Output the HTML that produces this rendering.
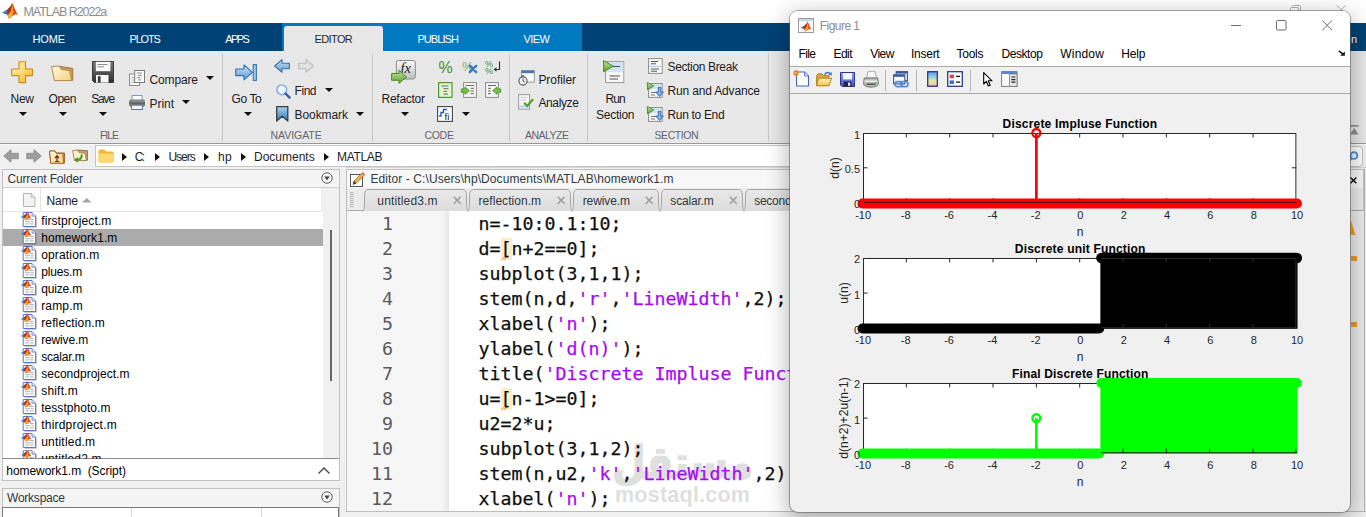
<!DOCTYPE html>
<html lang="en"><head><meta charset="utf-8"><title>MATLAB R2022a</title>
<style>
html,body{margin:0;padding:0;}
body{width:1366px;height:517px;overflow:hidden;background:#f0f0f0;font-family:"Liberation Sans",sans-serif;position:relative;}
#main{position:absolute;left:0;top:0;width:1366px;height:517px;overflow:hidden;background:#f0f0f0;}
.t{position:absolute;white-space:pre;}
.b{position:absolute;box-sizing:border-box;}
svg{position:absolute;overflow:visible;}
#fig{position:absolute;left:790px;top:11px;width:560px;height:501px;background:#f0f0f0;border-radius:8px;overflow:hidden;
 box-shadow:0 6px 22px 2px rgba(0,0,0,.30),0 0 0 1px rgba(110,110,110,.55);}

</style></head>
<body>
<div id="main">
<div class="b" style="left:0px;top:0px;width:1366px;height:23px;background:#ffffff;"></div>
<div class="b" style="left:0px;top:23px;width:1366px;height:28px;background:#004275;"></div>
<div class="b" style="left:281.5px;top:23px;width:300.7px;height:28px;background:#0079c1;"></div>
<div class="b" style="left:284px;top:26px;width:99px;height:25px;background:#e8e8e8;border-radius:3px 3px 0 0;"></div>
<div class="b" style="left:0px;top:51px;width:1366px;height:92px;background:#e8e8e8;"></div>
<div class="b" style="left:0px;top:143px;width:1366px;height:1px;background:#999999;"></div>
<div class="b" style="left:0px;top:144px;width:1366px;height:1px;background:#fbfbfb;"></div>
<div class="b" style="left:222px;top:54px;width:1px;height:87px;background:#c6c6c6;"></div>
<div class="b" style="left:372px;top:54px;width:1px;height:87px;background:#c6c6c6;"></div>
<div class="b" style="left:509px;top:54px;width:1px;height:87px;background:#c6c6c6;"></div>
<div class="b" style="left:587px;top:54px;width:1px;height:87px;background:#c6c6c6;"></div>
<div class="b" style="left:768px;top:54px;width:1px;height:87px;background:#c6c6c6;"></div>
<svg style="left:19px;top:112px;" width="8" height="4" viewBox="0 0 8 4"><polygon points="0,0 8,0 4.0,4" fill="#111"/></svg>
<svg style="left:59px;top:112px;" width="8" height="4" viewBox="0 0 8 4"><polygon points="0,0 8,0 4.0,4" fill="#111"/></svg>
<svg style="left:99px;top:112px;" width="8" height="4" viewBox="0 0 8 4"><polygon points="0,0 8,0 4.0,4" fill="#111"/></svg>
<svg style="left:206px;top:76px;" width="8" height="4" viewBox="0 0 8 4"><polygon points="0,0 8,0 4.0,4" fill="#111"/></svg>
<svg style="left:182px;top:100px;" width="8" height="4" viewBox="0 0 8 4"><polygon points="0,0 8,0 4.0,4" fill="#111"/></svg>
<svg style="left:243.5px;top:112px;" width="8" height="4" viewBox="0 0 8 4"><polygon points="0,0 8,0 4.0,4" fill="#111"/></svg>
<svg style="left:325.4px;top:88px;" width="8" height="4" viewBox="0 0 8 4"><polygon points="0,0 8,0 4.0,4" fill="#111"/></svg>
<svg style="left:356.4px;top:112px;" width="8" height="4" viewBox="0 0 8 4"><polygon points="0,0 8,0 4.0,4" fill="#111"/></svg>
<svg style="left:400.6px;top:112px;" width="8" height="4" viewBox="0 0 8 4"><polygon points="0,0 8,0 4.0,4" fill="#111"/></svg>
<svg style="left:461.5px;top:112px;" width="8" height="4" viewBox="0 0 8 4"><polygon points="0,0 8,0 4.0,4" fill="#111"/></svg>
<div class="b" style="left:0px;top:145px;width:1366px;height:24px;background:#f0f0f0;"></div>
<div class="b" style="left:95px;top:145px;width:1250px;height:22px;background:#ffffff;border:1px solid #c4c4c4;"></div>
<svg style="left:121.8px;top:152.5px;" width="5" height="8" viewBox="0 0 5 8"><polygon points="0,0 5,4.0 0,8" fill="#111"/></svg>
<svg style="left:154.7px;top:152.5px;" width="5" height="8" viewBox="0 0 5 8"><polygon points="0,0 5,4.0 0,8" fill="#111"/></svg>
<svg style="left:204.4px;top:152.5px;" width="5" height="8" viewBox="0 0 5 8"><polygon points="0,0 5,4.0 0,8" fill="#111"/></svg>
<svg style="left:241px;top:152.5px;" width="5" height="8" viewBox="0 0 5 8"><polygon points="0,0 5,4.0 0,8" fill="#111"/></svg>
<svg style="left:323.9px;top:152.5px;" width="5" height="8" viewBox="0 0 5 8"><polygon points="0,0 5,4.0 0,8" fill="#111"/></svg>
<div class="b" style="left:2px;top:169px;width:338px;height:312px;background:#ffffff;border:1px solid #c2c2c2;"></div>
<div class="b" style="left:3px;top:170px;width:336px;height:17px;background:#f4f4f4;"></div>
<div class="b" style="left:3px;top:187px;width:336px;height:1px;background:#d0d0d0;"></div>
<div class="b" style="left:3px;top:188px;width:317.5px;height:23px;background:#ffffff;"></div>
<div class="b" style="left:320.5px;top:188px;width:3px;height:23.5px;background:#f0f0f0;"></div>
<div class="b" style="left:3px;top:211px;width:317.5px;height:1px;background:#e4e4e4;"></div>
<div class="b" style="left:40px;top:188px;width:1px;height:23px;background:#e4e4e4;"></div>
<svg style="left:81.5px;top:198.4px;" width="9.5" height="4.5" viewBox="0 0 9.5 4.5"><polygon points="0,4.5 9.5,4.5 4.75,0" fill="#a6a698"/></svg>
<div class="b" style="left:323px;top:188px;width:16px;height:270px;background:#f0f0f0;"></div>
<div class="b" style="left:330px;top:229.5px;width:2px;height:151.5px;background:#686868;"></div>
<div class="b" style="left:3px;top:229px;width:320px;height:16.5px;background:#ababab;"></div>
<div class="b" style="left:2px;top:458px;width:338px;height:23px;background:#ffffff;border:1px solid #c2c2c2;border-top:1px solid #8c8c8c;"></div>
<svg style="left:318px;top:466.5px;" width="12" height="7" viewBox="0 0 12 7"><polyline points="0.5,6.5 6,1 11.5,6.5" fill="none" stroke="#444" stroke-width="1.4"/></svg>
<div class="b" style="left:2px;top:488px;width:338px;height:30px;background:#ffffff;border:1px solid #c2c2c2;"></div>
<div class="b" style="left:3px;top:489px;width:336px;height:18px;background:#f4f4f4;"></div>
<div class="b" style="left:2px;top:507px;width:337px;height:12px;background:#ffffff;border:1px solid #7a7a7a;"></div>
<div class="b" style="left:131px;top:508px;width:1px;height:10px;background:#d8d8d8;"></div>
<div class="b" style="left:261px;top:508px;width:1px;height:10px;background:#d8d8d8;"></div>
<svg style="left:320.6px;top:172px;" width="12" height="12" viewBox="0 0 12 12"><circle cx="6" cy="6" r="5.2" fill="#fff" stroke="#555" stroke-width="1"/><polygon points="3.2,4.6 8.8,4.6 6,8.4" fill="#444"/></svg>
<svg style="left:321px;top:491px;" width="12" height="12" viewBox="0 0 12 12"><circle cx="6" cy="6" r="5.2" fill="#fff" stroke="#555" stroke-width="1"/><polygon points="3.2,4.6 8.8,4.6 6,8.4" fill="#444"/></svg>
<div class="b" style="left:346px;top:166.5px;width:1020px;height:1px;background:#d8d8d8;"></div>
<div class="b" style="left:346px;top:169px;width:1018px;height:343px;background:#ffffff;border:1px solid #c2c2c2;"></div>
<div class="b" style="left:347px;top:170px;width:1016px;height:18px;background:#f8f8f8;"></div>
<div class="b" style="left:347px;top:188px;width:1016px;height:23px;background:#ececec;"></div>
<div class="b" style="left:347px;top:210px;width:1016px;height:1px;background:#a9a9a9;"></div>
<div class="b" style="left:347px;top:211px;width:102px;height:300px;background:linear-gradient(90deg,#f6f6f6 0,#f6f6f6 95px,#e9e9e9 101px,#e2e2e2 102px);"></div>
<div class="b" style="left:449px;top:211px;width:914px;height:300px;background:#ffffff;"></div>
<div class="b" style="left:346px;top:511px;width:1020px;height:1px;background:#bdbdbd;"></div>
<div class="b" style="left:346px;top:512px;width:1020px;height:5px;background:#f0f0f0;"></div>
<svg style="left:349.5px;top:171.5px;" width="15" height="15" viewBox="0 0 15 15"><rect x="0.5" y="2.5" width="12" height="12" fill="#fdfdfd" stroke="#555" stroke-width="1"/><polygon points="3,12.5 4,9 12,1 14.3,3.3 6.3,11.3" fill="#e8b04a" stroke="#7a5a20" stroke-width=".6"/><polygon points="12,1 13,0 15,2 14.3,3.3" fill="#e06a6a"/><polygon points="3,12.5 4,9 6.3,11.3" fill="#333"/></svg>
<svg style="left:350px;top:192px;" width="4" height="15" viewBox="0 0 4 15"><rect x="0" y="0" width="3.5" height="1" fill="#b4b4b4"/><rect x="0" y="2" width="3.5" height="1" fill="#b4b4b4"/><rect x="0" y="4" width="3.5" height="1" fill="#b4b4b4"/><rect x="0" y="6" width="3.5" height="1" fill="#b4b4b4"/><rect x="0" y="8" width="3.5" height="1" fill="#b4b4b4"/><rect x="0" y="10" width="3.5" height="1" fill="#b4b4b4"/><rect x="0" y="12" width="3.5" height="1" fill="#b4b4b4"/><rect x="0" y="14" width="3.5" height="1" fill="#b4b4b4"/></svg>
<svg width="0" height="0" style="left:0;top:0"><defs><linearGradient id="tg" x1="0" y1="0" x2="0" y2="1"><stop offset="0" stop-color="#e9e9e9"/><stop offset="1" stop-color="#dcdcdc"/></linearGradient></defs></svg>
<svg style="left:362.0px;top:188.5px;" width="107.0" height="22" viewBox="0 0 107.0 22"><path d="M0,22 C1.6,22 2.2,20.5 2.4,14 L2.6,6 C2.7,2.5 3.8,0.5 6.5,0.5 L100.5,0.5 C103.2,0.5 104.3,2.5 104.4,6 L104.6,14 C104.8,20.5 105.4,22 107.0,22 Z" fill="url(#tg)" stroke="none"/><path d="M0,22 C1.6,22 2.2,20.5 2.4,14 L2.6,6 C2.7,2.5 3.8,0.5 6.5,0.5 L100.5,0.5 C103.2,0.5 104.3,2.5 104.4,6 L104.6,14 C104.8,20.5 105.4,22 107.0,22" fill="none" stroke="#a4a4a4" stroke-width="1"/></svg>
<svg style="left:453px;top:195.5px;" width="8.5" height="8.5" viewBox="0 0 8.5 8.5"><path d="M0.8,0.8 L7.7,7.7 M7.7,0.8 L0.8,7.7" stroke="#9c9c9c" stroke-width="1.5" fill="none"/></svg>
<svg style="left:467.0px;top:188.5px;" width="106.0" height="22" viewBox="0 0 106.0 22"><path d="M0,22 C1.6,22 2.2,20.5 2.4,14 L2.6,6 C2.7,2.5 3.8,0.5 6.5,0.5 L99.5,0.5 C102.2,0.5 103.3,2.5 103.4,6 L103.6,14 C103.8,20.5 104.4,22 106.0,22 Z" fill="url(#tg)" stroke="none"/><path d="M0,22 C1.6,22 2.2,20.5 2.4,14 L2.6,6 C2.7,2.5 3.8,0.5 6.5,0.5 L99.5,0.5 C102.2,0.5 103.3,2.5 103.4,6 L103.6,14 C103.8,20.5 104.4,22 106.0,22" fill="none" stroke="#a4a4a4" stroke-width="1"/></svg>
<svg style="left:557px;top:195.5px;" width="8.5" height="8.5" viewBox="0 0 8.5 8.5"><path d="M0.8,0.8 L7.7,7.7 M7.7,0.8 L0.8,7.7" stroke="#9c9c9c" stroke-width="1.5" fill="none"/></svg>
<svg style="left:571.0px;top:188.5px;" width="90.0" height="22" viewBox="0 0 90.0 22"><path d="M0,22 C1.6,22 2.2,20.5 2.4,14 L2.6,6 C2.7,2.5 3.8,0.5 6.5,0.5 L83.5,0.5 C86.2,0.5 87.3,2.5 87.4,6 L87.6,14 C87.8,20.5 88.4,22 90.0,22 Z" fill="url(#tg)" stroke="none"/><path d="M0,22 C1.6,22 2.2,20.5 2.4,14 L2.6,6 C2.7,2.5 3.8,0.5 6.5,0.5 L83.5,0.5 C86.2,0.5 87.3,2.5 87.4,6 L87.6,14 C87.8,20.5 88.4,22 90.0,22" fill="none" stroke="#a4a4a4" stroke-width="1"/></svg>
<svg style="left:645px;top:195.5px;" width="8.5" height="8.5" viewBox="0 0 8.5 8.5"><path d="M0.8,0.8 L7.7,7.7 M7.7,0.8 L0.8,7.7" stroke="#9c9c9c" stroke-width="1.5" fill="none"/></svg>
<svg style="left:659.0px;top:188.5px;" width="86.0" height="22" viewBox="0 0 86.0 22"><path d="M0,22 C1.6,22 2.2,20.5 2.4,14 L2.6,6 C2.7,2.5 3.8,0.5 6.5,0.5 L79.5,0.5 C82.2,0.5 83.3,2.5 83.4,6 L83.6,14 C83.8,20.5 84.4,22 86.0,22 Z" fill="url(#tg)" stroke="none"/><path d="M0,22 C1.6,22 2.2,20.5 2.4,14 L2.6,6 C2.7,2.5 3.8,0.5 6.5,0.5 L79.5,0.5 C82.2,0.5 83.3,2.5 83.4,6 L83.6,14 C83.8,20.5 84.4,22 86.0,22" fill="none" stroke="#a4a4a4" stroke-width="1"/></svg>
<svg style="left:728.7px;top:195.5px;" width="8.5" height="8.5" viewBox="0 0 8.5 8.5"><path d="M0.8,0.8 L7.7,7.7 M7.7,0.8 L0.8,7.7" stroke="#9c9c9c" stroke-width="1.5" fill="none"/></svg>
<svg style="left:743.0px;top:188.5px;" width="118.0" height="22" viewBox="0 0 118.0 22"><path d="M0,22 C1.6,22 2.2,20.5 2.4,14 L2.6,6 C2.7,2.5 3.8,0.5 6.5,0.5 L111.5,0.5 C114.2,0.5 115.3,2.5 115.4,6 L115.6,14 C115.8,20.5 116.4,22 118.0,22 Z" fill="url(#tg)" stroke="none"/><path d="M0,22 C1.6,22 2.2,20.5 2.4,14 L2.6,6 C2.7,2.5 3.8,0.5 6.5,0.5 L111.5,0.5 C114.2,0.5 115.3,2.5 115.4,6 L115.6,14 C115.8,20.5 116.4,22 118.0,22" fill="none" stroke="#a4a4a4" stroke-width="1"/></svg>
<div class="b" style="left:501.3px;top:237.7px;width:10.5px;height:22.5px;background:#fdecc4;"></div>
<svg style="left:501.0px;top:255.7px;" width="7" height="5" viewBox="0 0 7 5"><path d="M0.5,4.5 L2.5,1.5 L4,3.5 L6,0.5" stroke="#f0a030" stroke-width="1" fill="none"/></svg>
<div class="b" style="left:501.3px;top:387.7px;width:10.5px;height:22.5px;background:#fdecc4;"></div>
<svg style="left:501.0px;top:405.7px;" width="7" height="5" viewBox="0 0 7 5"><path d="M0.5,4.5 L2.5,1.5 L4,3.5 L6,0.5" stroke="#f0a030" stroke-width="1" fill="none"/></svg>
<span class="t" style="left:612.4px;top:440px;font-family:'DejaVu Sans',sans-serif;font-weight:bold;font-size:45px;line-height:45px;color:#8c8c8c;-webkit-text-stroke:1.6px #8c8c8c;opacity:.27;transform:scaleX(.857);transform-origin:0 0;">مستقل</span>
<svg width="0" height="0" style="left:0;top:0"><defs>
<linearGradient id="gPlus" x1="0" y1="0" x2="1" y2="1"><stop offset="0" stop-color="#fff6c8"/><stop offset=".55" stop-color="#fdd667"/><stop offset="1" stop-color="#f2ae1c"/></linearGradient>
<linearGradient id="gFold" x1="0" y1="0" x2="1" y2="1"><stop offset="0" stop-color="#fffbe6"/><stop offset="1" stop-color="#f6d27c"/></linearGradient>
<linearGradient id="gFlop" x1="0" y1="0" x2="0" y2="1"><stop offset="0" stop-color="#7a7a7a"/><stop offset="1" stop-color="#2e2e2e"/></linearGradient>
<linearGradient id="gBlue" x1="0" y1="0" x2="0" y2="1"><stop offset="0" stop-color="#cfe3f5"/><stop offset="1" stop-color="#5b9bd5"/></linearGradient>
<linearGradient id="gGrey" x1="0" y1="0" x2="0" y2="1"><stop offset="0" stop-color="#ececec"/><stop offset="1" stop-color="#bdbdbd"/></linearGradient>
<linearGradient id="gGreen" x1="0" y1="0" x2="0" y2="1"><stop offset="0" stop-color="#c4e59a"/><stop offset="1" stop-color="#5aa02c"/></linearGradient>
<linearGradient id="gBk" x1="0" y1="0" x2="0" y2="1"><stop offset="0" stop-color="#a9d4f0"/><stop offset="1" stop-color="#2f78b8"/></linearGradient>
<linearGradient id="gFx" x1="0" y1="0" x2="0" y2="1"><stop offset="0" stop-color="#fafafa"/><stop offset="1" stop-color="#bcbcbc"/></linearGradient>
<linearGradient id="gPrn" x1="0" y1="0" x2="0" y2="1"><stop offset="0" stop-color="#b8b8b8"/><stop offset=".5" stop-color="#5c5c5c"/><stop offset="1" stop-color="#a0a0a0"/></linearGradient>
</defs></svg>
<svg style="left:11px;top:61px;" width="22" height="22" viewBox="0 0 22 22"><path d="M8,0.7 h6.6 v7.3 h7 v6.6 h-7 v7 h-6.6 v-7 h-7.3 v-6.6 h7.3 z" fill="url(#gPlus)" stroke="#c98a1a" stroke-width="1.1" stroke-linejoin="round"/></svg>
<svg style="left:51px;top:65px;" width="23" height="17" viewBox="0 0 23 17"><polygon points="8,1.3 21.8,3.4 21.8,15.3 5,15.3" fill="#c79a62" stroke="#a87638" stroke-width="1"/><polygon points="0.6,1.5 8.2,1 10.3,4.6 18.6,5.4 20.6,15.6 3.4,15.6" fill="url(#gFold)" stroke="#b98a48" stroke-width="1" stroke-linejoin="round"/></svg>
<svg style="left:92px;top:61px;" width="22" height="22" viewBox="0 0 22 22"><path d="M0.5,0.5 H21.5 V21.5 H2.5 L0.5,19.5 Z" fill="url(#gFlop)" stroke="#3c3c3c" stroke-width="1"/><rect x="3.8" y="0.8" width="14.6" height="9.4" fill="#fafafa"/><path d="M5.5,3.5 H15.5 M5.5,5.8 H12" stroke="#8a8a8a" stroke-width="1"/><rect x="4" y="14" width="12.5" height="7.6" fill="#fafafa"/><rect x="5.8" y="15.2" width="2.8" height="6.4" fill="#3a3a3a"/></svg>
<svg style="left:129px;top:70px;" width="16" height="16" viewBox="0 0 16 16"><rect x="0.5" y="4" width="10" height="11.5" fill="#f8f8f8" stroke="#8c8c8c" stroke-width="1"/><path d="M2.5,7.5 H6 M2.5,10 H5 M2.5,12.5 H7" stroke="#aaa" stroke-width="1"/><rect x="5.7" y="0.5" width="9.8" height="12" fill="#fcfcfc" stroke="#7c7c7c" stroke-width="1"/><path d="M7.8,3 H13 M9,5.3 H13 M7.8,7.6 H11.5 M9,9.9 H12" stroke="#8a8a8a" stroke-width="1"/></svg>
<svg style="left:129px;top:95px;" width="16" height="15" viewBox="0 0 16 15"><rect x="3" y="0.5" width="10" height="5.5" fill="#fdfdfd" stroke="#7f9cc0" stroke-width="1"/><rect x="0.5" y="5" width="15" height="6.2" rx="1.5" fill="url(#gPrn)" stroke="#5a5a5a" stroke-width=".8"/><rect x="2.6" y="10.2" width="10.8" height="4.3" fill="#f4f8fd" stroke="#4c78b8" stroke-width="1"/></svg>
<svg style="left:235px;top:64px;" width="22" height="17" viewBox="0 0 22 17"><polygon points="0.7,5 9,5 9,0.8 17.5,8.3 9,15.8 9,11.6 0.7,11.6" fill="url(#gBlue)" stroke="#2f6fb0" stroke-width="1.1" stroke-linejoin="round"/><rect x="18.2" y="0.6" width="3.2" height="15.8" fill="#9cc4e8" stroke="#2f6fb0" stroke-width="1"/></svg>
<svg style="left:274px;top:59px;" width="16" height="14" viewBox="0 0 16 14"><polygon points="0.7,7 8,0.7 8,4.3 15.3,4.3 15.3,9.7 8,9.7 8,13.3" fill="url(#gBlue)" stroke="#2f6fb0" stroke-width="1.1" stroke-linejoin="round"/></svg>
<svg style="left:298px;top:59px;" width="16" height="14" viewBox="0 0 16 14"><polygon points="15.3,7 8,0.7 8,4.3 0.7,4.3 0.7,9.7 8,9.7 8,13.3" fill="#e2e2e2" stroke="#bcbcbc" stroke-width="1.1" stroke-linejoin="round"/></svg>
<svg style="left:275.5px;top:83.5px;" width="15" height="15" viewBox="0 0 15 15"><circle cx="5.8" cy="5.8" r="4.9" fill="#eef6fd" stroke="#7aa6d8" stroke-width="1.4"/><path d="M9.5,9.5 L13.6,13.6" stroke="#2a5fa8" stroke-width="2.4" stroke-linecap="round"/></svg>
<svg style="left:276px;top:106px;" width="13" height="16" viewBox="0 0 13 16"><path d="M0.7,0.7 H11.8 V15 L6.25,10.2 L0.7,15 Z" fill="url(#gBk)" stroke="#3c3c3c" stroke-width="1.3" stroke-linejoin="round"/></svg>
<svg style="left:390.5px;top:60px;" width="25" height="24" viewBox="0 0 25 24"><rect x="5.3" y="0.5" width="19" height="18.5" rx="2.5" fill="url(#gFx)" stroke="#8a8a8a" stroke-width="1"/><text x="9.6" y="13.4" font-family="Liberation Serif, serif" font-style="italic" font-size="14.5" fill="#222">fx</text><polygon points="0.6,13.5 8,13.5 8,10.4 15.3,17 8,23.4 8,20.3 0.6,20.3" fill="url(#gGreen)" stroke="#4c8a22" stroke-width="1" stroke-linejoin="round"/></svg>
<svg style="left:438px;top:58.5px;" width="15" height="15" viewBox="0 0 15 15"><text x="0.5" y="13.6" font-family="Liberation Sans, sans-serif" font-size="16" fill="#3f8f1f">%</text></svg>
<svg style="left:461.5px;top:58.5px;" width="16" height="15" viewBox="0 0 16 15"><text x="0" y="11.5" font-family="Liberation Sans, sans-serif" font-size="13" fill="#7ab55a">%</text><path d="M7.8,6.8 L14.2,13.2 M14.2,6.8 L7.8,13.2" stroke="#3a78c0" stroke-width="2.4" stroke-linecap="round"/></svg>
<svg style="left:485px;top:58.5px;" width="16" height="15" viewBox="0 0 16 15"><text x="0" y="7.5" font-family="Liberation Sans, sans-serif" font-size="9" fill="#3f8f1f">%</text><text x="0" y="14.5" font-family="Liberation Sans, sans-serif" font-size="9" fill="#3f8f1f">%</text><path d="M14.5,2.5 V10.5 H10" stroke="#333" stroke-width="1.2" fill="none"/><polygon points="8.5,10.5 11.5,8.3 11.5,12.7" fill="#333"/></svg>
<svg style="left:437.5px;top:82px;" width="15" height="16" viewBox="0 0 15 16"><rect x="0.6" y="0.6" width="13.4" height="14.8" fill="#e6f3d4" stroke="#4e9a28" stroke-width="1.2"/><path d="M3.5,4 H10.5 M5.5,6.7 H10.5 M5.5,9.4 H9 M5.5,12.1 H10" stroke="#5a7a4a" stroke-width="1"/></svg>
<svg style="left:461px;top:82px;" width="16" height="16" viewBox="0 0 16 16"><rect x="2.6" y="0.6" width="12.8" height="14.8" fill="#f8f8f8" stroke="#8c8c8c" stroke-width="1"/><path d="M5,3.5 H13 M9.5,6.3 H13 M9.5,9 H13 M9.5,11.7 H13" stroke="#666" stroke-width="1"/><polygon points="0.3,6.9 4,6.9 4,4.8 8.3,8.6 4,12.4 4,10.3 0.3,10.3" fill="#7cc142" stroke="#3f8f1f" stroke-width=".8"/></svg>
<svg style="left:485px;top:82px;" width="16" height="16" viewBox="0 0 16 16"><rect x="0.6" y="0.6" width="12.8" height="14.8" fill="#f8f8f8" stroke="#8c8c8c" stroke-width="1"/><path d="M3,3.5 H11 M3,6.3 H6 M3,9 H6 M3,11.7 H6" stroke="#666" stroke-width="1"/><polygon points="15.7,6.9 12,6.9 12,4.8 7.7,8.6 12,12.4 12,10.3 15.7,10.3" fill="#7cc142" stroke="#3f8f1f" stroke-width=".8"/></svg>
<svg style="left:437px;top:106px;" width="16" height="16" viewBox="0 0 16 16"><rect x="0.6" y="0.6" width="14.8" height="14.8" fill="#ffffff" stroke="#444" stroke-width="1.1"/><path d="M2,10 H4 V6.5 H6.5 V3.5 H10" stroke="#1f55c8" stroke-width="1.4" fill="none"/><text x="7.5" y="14" font-family="Liberation Sans, sans-serif" font-size="9.5" fill="#111">fi</text></svg>
<svg style="left:518px;top:70px;" width="17" height="16" viewBox="0 0 17 16"><rect x="3.5" y="0.6" width="12.8" height="11.5" fill="#fafafa" stroke="#9a9a9a" stroke-width="1"/><rect x="3.5" y="0.6" width="12.8" height="2.6" fill="#4a78b0"/><circle cx="5" cy="11" r="4.1" fill="#f4f4f4" stroke="#555" stroke-width="1.1"/><path d="M5,11 V8.6 M5,11 L6.8,12.2 M4,5.8 H6" stroke="#444" stroke-width="1"/></svg>
<svg style="left:518px;top:94px;" width="17" height="16" viewBox="0 0 17 16"><rect x="0.6" y="0.6" width="11" height="14.6" fill="#f6f6f6" stroke="#9a9a9a" stroke-width="1"/><path d="M2.5,3.5 H9 M2.5,6 H8" stroke="#cfcfcf" stroke-width="1"/><rect x="1.4" y="11" width="9.4" height="3.6" fill="#c5dcf0"/><path d="M6.8,9.4 L9.2,12 L14.6,5.8" stroke="#4fa02a" stroke-width="2.2" fill="none" stroke-linecap="round" stroke-linejoin="round"/></svg>
<svg style="left:602.5px;top:60px;" width="22" height="24" viewBox="0 0 22 24"><rect x="2.6" y="1.6" width="18.2" height="21" fill="#f7f7f7" stroke="#9a9a9a" stroke-width="1"/><rect x="3.1" y="2.1" width="17.2" height="10" fill="#cfe4f5"/><path d="M6.5,16 H17 M6.5,19 H15" stroke="#555" stroke-width="1.1"/><path d="M10,6.5 H17" stroke="#555" stroke-width="1.1"/><polygon points="0.6,0.6 10.4,6.2 0.6,11.8" fill="url(#gGreen)" stroke="#4c8a22" stroke-width="1" stroke-linejoin="round"/></svg>
<svg style="left:647.5px;top:58px;" width="15" height="16" viewBox="0 0 15 16"><rect x="0.6" y="0.6" width="13.6" height="14.8" fill="#f9f9f9" stroke="#8c8c8c" stroke-width="1"/><path d="M3,3.5 H10 M3,5.8 H8" stroke="#555" stroke-width="1"/><rect x="1.2" y="7.8" width="12.4" height="1.4" fill="#b9d3ea"/><path d="M3,11 H11 M3,13.2 H9" stroke="#555" stroke-width="1"/></svg>
<svg style="left:647px;top:82px;" width="17" height="16" viewBox="0 0 17 16"><rect x="1.6" y="1.6" width="13.6" height="13.8" fill="#f4f4f4" stroke="#8c8c8c" stroke-width="1"/><rect x="2.2" y="2.2" width="12.4" height="5" fill="#cfe4f5"/><path d="M4,10.5 H9 M4,13 H8" stroke="#777" stroke-width="1"/><polygon points="0.4,0.4 6.8,4 0.4,7.8" fill="url(#gGreen)" stroke="#3f8f1f" stroke-width=".9" stroke-linejoin="round"/><path d="M11.3,5.5 V10 H8.8 L12.6,14.6 L16.4,10 H13.9 V5.5 Z" fill="#7fb2e6" stroke="#2a64b0" stroke-width=".9" stroke-linejoin="round"/></svg>
<svg style="left:647px;top:106px;" width="17" height="16" viewBox="0 0 17 16"><rect x="1.6" y="1.6" width="13.6" height="13.8" fill="#f4f4f4" stroke="#8c8c8c" stroke-width="1"/><rect x="2.2" y="2.2" width="12.4" height="5" fill="#cfe4f5"/><path d="M4,10.5 H9 M4,13 H8" stroke="#777" stroke-width="1"/><polygon points="0.4,0.4 6.8,4 0.4,7.8" fill="url(#gGreen)" stroke="#3f8f1f" stroke-width=".9" stroke-linejoin="round"/><path d="M11.3,5.5 V10 H8.8 L12.6,14.6 L16.4,10 H13.9 V5.5 Z" fill="#7fb2e6" stroke="#2a64b0" stroke-width=".9" stroke-linejoin="round"/></svg>
<svg style="left:3px;top:149px;" width="16" height="14" viewBox="0 0 16 14"><polygon points="0.7,7 8,0.7 8,4.3 15.3,4.3 15.3,9.7 8,9.7 8,13.3" fill="#9e9e9e" stroke="#8a8a8a" stroke-width=".8" stroke-linejoin="round"/></svg>
<svg style="left:26px;top:149px;" width="16" height="14" viewBox="0 0 16 14"><polygon points="15.3,7 8,0.7 8,4.3 0.7,4.3 0.7,9.7 8,9.7 8,13.3" fill="#9e9e9e" stroke="#8a8a8a" stroke-width=".8" stroke-linejoin="round"/></svg>
<svg style="left:49px;top:149.5px;" width="17" height="14" viewBox="0 0 17 14"><path d="M0.6,1 H6 L7.4,3 H15.4 V13.2 H1.8 Z" fill="#caa060" stroke="#9a5e1c" stroke-width="1" stroke-linejoin="round"/><path d="M0.6,1 H6 L7.4,3.6 H13.6 L14.8,13.2 H1.8 Z" fill="url(#gFold)" stroke="#a2682a" stroke-width="1" stroke-linejoin="round"/><path d="M8,11.4 V6.8 M5.8,8.2 L8,5.6 L10.2,8.2 M6,11.5 H10.2" stroke="#6a2a10" stroke-width="1.2" fill="none"/></svg>
<svg style="left:72px;top:149px;" width="17" height="15" viewBox="0 0 17 15"><polygon points="4.5,1 15.4,1.8 15.4,11.2 2.5,11.2" fill="#c9a26a" stroke="#8a6630" stroke-width=".9"/><polygon points="0.6,1.6 5.6,1.2 7,3.6 13,4.2 14.4,11.6 2.4,11.6" fill="#fbf1cf" stroke="#a88448" stroke-width=".9" stroke-linejoin="round"/><path d="M9.8,5.5 C9.8,9 8,10.8 5.2,10.8" stroke="#3f9a20" stroke-width="2" fill="none"/><polygon points="2,10.8 6,8 6,13.8" fill="#3f9a20"/></svg>
<svg style="left:97.5px;top:148.5px;" width="17" height="14" viewBox="0 0 17 14"><path d="M0.5,2.2 Q0.5,0.5 2.2,0.5 H6.5 L8,2.6 H14 Q15.8,2.6 15.8,4.4 V12 Q15.8,13.5 14.3,13.5 H2 Q0.5,13.5 0.5,12 Z" fill="#f7b52c"/><path d="M0.5,4.6 H15.8 V12 Q15.8,13.5 14.3,13.5 H2 Q0.5,13.5 0.5,12 Z" fill="#fcd873"/></svg>
<svg width="0" height="0" style="left:0;top:0"><defs>
<linearGradient id="gLogoB" x1="0" y1="0" x2="1" y2="0"><stop offset="0" stop-color="#4aa3ea"/><stop offset="1" stop-color="#1d4f8e"/></linearGradient>
<linearGradient id="gLogoR" x1="0" y1="0" x2="1" y2="1"><stop offset="0" stop-color="#7a1508"/><stop offset=".5" stop-color="#d8401c"/><stop offset="1" stop-color="#f0592a"/></linearGradient>
<linearGradient id="gLogoO" x1="0" y1="0" x2="0" y2="1"><stop offset="0" stop-color="#e8861a"/><stop offset="1" stop-color="#fdb92c"/></linearGradient>
<g id="mlogo">
<polygon points="0,9.5 5.4,6.4 8.6,8.2 6,11.6 3,11.2" fill="url(#gLogoB)"/>
<polygon points="5.4,6.4 8.2,3.6 10.4,0 12.6,5.6 15.8,12 13.6,11.2 11,12.6 7,15.8 5.2,11.4" fill="url(#gLogoR)"/>
<polygon points="10.4,0 11.6,9 10,12.6 7,15.8 5.8,12.6 8.8,8.4" fill="url(#gLogoO)"/>
</g>
<g id="mfile">
<path d="M1.6,1 H10.2 L14,4.8 V15 H1.6 Z" fill="#8a8a8a" transform="translate(.8,.7)" opacity=".55"/>
<path d="M1.2,0.5 H10 L13.6,4.1 V14.5 H1.2 Z" fill="#fdfdfd" stroke="#5b78c2" stroke-width="1" stroke-linejoin="round"/>
<path d="M10,0.5 V4.1 H13.6" fill="#dfe6f5" stroke="#5b78c2" stroke-width=".8"/>
<path d="M3.4,7.5 H6.2 M7.2,7.5 H11.6 M3.4,9.7 H8 M9,9.7 H11.6 M3.4,11.9 H6.8 M7.8,11.9 H11.6" stroke="#b0b0b0" stroke-width="1"/>
<g transform="translate(-1.2,-0.6) scale(0.66,0.58)"><use href="#mlogo"/></g>
</g>
</defs></svg>
<svg style="left:2.1px;top:3px;" width="16" height="16" viewBox="0 0 16 16"><use href="#mlogo"/></svg>
<svg style="left:23px;top:193px;" width="13" height="14" viewBox="0 0 13 14"><path d="M0.5,0.5 H8.2 L12,4.3 V13.5 H0.5 Z" fill="#f4f4f4" stroke="#b2b2b2" stroke-width="1"/><path d="M8.2,0.5 V4.3 H12" fill="#e4e4e4" stroke="#b2b2b2" stroke-width=".8"/></svg>
<svg style="left:22px;top:212.3px;" width="15" height="16" viewBox="0 0 15 16"><use href="#mfile"/></svg>
<svg style="left:22px;top:229.3px;" width="15" height="16" viewBox="0 0 15 16"><use href="#mfile"/></svg>
<svg style="left:22px;top:246.3px;" width="15" height="16" viewBox="0 0 15 16"><use href="#mfile"/></svg>
<svg style="left:22px;top:263.3px;" width="15" height="16" viewBox="0 0 15 16"><use href="#mfile"/></svg>
<svg style="left:22px;top:280.3px;" width="15" height="16" viewBox="0 0 15 16"><use href="#mfile"/></svg>
<svg style="left:22px;top:297.3px;" width="15" height="16" viewBox="0 0 15 16"><use href="#mfile"/></svg>
<svg style="left:22px;top:314.3px;" width="15" height="16" viewBox="0 0 15 16"><use href="#mfile"/></svg>
<svg style="left:22px;top:331.3px;" width="15" height="16" viewBox="0 0 15 16"><use href="#mfile"/></svg>
<svg style="left:22px;top:348.3px;" width="15" height="16" viewBox="0 0 15 16"><use href="#mfile"/></svg>
<svg style="left:22px;top:365.3px;" width="15" height="16" viewBox="0 0 15 16"><use href="#mfile"/></svg>
<svg style="left:22px;top:382.3px;" width="15" height="16" viewBox="0 0 15 16"><use href="#mfile"/></svg>
<svg style="left:22px;top:399.3px;" width="15" height="16" viewBox="0 0 15 16"><use href="#mfile"/></svg>
<svg style="left:22px;top:416.3px;" width="15" height="16" viewBox="0 0 15 16"><use href="#mfile"/></svg>
<svg style="left:22px;top:433.3px;" width="15" height="16" viewBox="0 0 15 16"><use href="#mfile"/></svg>
<svg style="left:22px;top:450.3px;clip-path:inset(0 0 8.3px 0);" width="15" height="16" viewBox="0 0 15 16"><use href="#mfile"/></svg>
<svg style="left:1350px;top:125px;" width="9" height="10" viewBox="0 0 9 10"><rect x="0" y="0" width="8.5" height="1.6" fill="#8e8e8e"/><polygon points="0,9.5 8.5,9.5 4.25,3" fill="#8e8e8e"/></svg>
<div class="b" style="left:1330px;top:146px;width:33px;height:21px;background:#ffffff;border:1px solid #c2c2c2;border-radius:4px;"></div>
<svg style="left:1349px;top:151px;" width="10" height="10" viewBox="0 0 10 10"><circle cx="5" cy="4.6" r="3.4" fill="#eaf3fc" stroke="#3f8ad8" stroke-width="1.7"/><path d="M2.5,7.3 L0.6,9.4" stroke="#3f8ad8" stroke-width="1.8"/></svg>
<svg style="left:1350px;top:176.5px;" width="7" height="7" viewBox="0 0 7 7"><path d="M0.5,0.5 L6.3,6.3 M6.3,0.5 L0.5,6.3" stroke="#111" stroke-width="1.5"/></svg>
<div class="b" style="left:1346px;top:211px;width:17.5px;height:300px;background:#ececec;"></div>
<div class="b" style="left:1363.5px;top:169px;width:1px;height:343px;background:#b4b4b4;"></div>
<svg style="left:1346px;top:220px;" width="10" height="16" viewBox="0 0 10 16"><polygon points="0,15 5,0.5 9.5,15" fill="#f5a020"/></svg>
<div class="b" style="left:1350.5px;top:256px;width:6.5px;height:5px;background:#f09a28;"></div>
<div class="b" style="left:1350.5px;top:322px;width:6.5px;height:4.5px;background:#f09a28;"></div>
<svg style="left:1244px;top:4.5px;" width="110" height="9" viewBox="0 0 110 9"><path d="M1,7.5 H11" stroke="#b0b0b0" stroke-width="1"/><rect x="46.5" y="2.5" width="8" height="7" rx="1" fill="none" stroke="#b0b0b0" stroke-width="1"/><path d="M48.5,2.5 V1.5 Q48.5,0.5 49.5,0.5 H55.5 Q56.5,0.5 56.5,1.5 V7" fill="none" stroke="#b0b0b0" stroke-width="1"/><path d="M93,0.5 L101.5,9 M101.5,0.5 L93,9" stroke="#b0b0b0" stroke-width="1"/></svg>
<span class="t" style="left:23.4px;top:6.4px;font-size:12.5px;line-height:12.5px;color:#8c8c8c;letter-spacing:-1.038px;">MATLAB R2022a</span>
<span class="t" style="left:32.6px;top:33.7px;font-size:11px;line-height:11px;color:#fff;letter-spacing:-0.200px;">HOME</span>
<span class="t" style="left:129.5px;top:33.7px;font-size:11px;line-height:11px;color:#fff;letter-spacing:-1.170px;">PLOTS</span>
<span class="t" style="left:225.2px;top:33.7px;font-size:11px;line-height:11px;color:#fff;letter-spacing:-1.586px;">APPS</span>
<span class="t" style="left:314.4px;top:33.7px;font-size:11px;line-height:11px;color:#2b2b2b;letter-spacing:-0.592px;">EDITOR</span>
<span class="t" style="left:417.4px;top:33.7px;font-size:11px;line-height:11px;color:#fff;letter-spacing:-0.930px;">PUBLISH</span>
<span class="t" style="left:523.5px;top:33.7px;font-size:11px;line-height:11px;color:#fff;letter-spacing:-0.542px;">VIEW</span>
<span class="t" style="left:1351.0px;top:33.7px;font-size:11px;line-height:11px;color:#fff;">n</span>
<span class="t" style="left:10.5px;top:93.3px;font-size:12px;line-height:12px;color:#1c1c24;letter-spacing:-0.258px;">New</span>
<span class="t" style="left:48.5px;top:93.3px;font-size:12px;line-height:12px;color:#1c1c24;letter-spacing:-0.453px;">Open</span>
<span class="t" style="left:91.2px;top:93.3px;font-size:12px;line-height:12px;color:#1c1c24;letter-spacing:-1.153px;">Save</span>
<span class="t" style="left:149.6px;top:73.8px;font-size:12px;line-height:12px;color:#1c1c24;letter-spacing:-0.160px;">Compare</span>
<span class="t" style="left:149.6px;top:97.8px;font-size:12px;line-height:12px;color:#1c1c24;letter-spacing:-0.072px;">Print</span>
<span class="t" style="left:100.0px;top:129.7px;font-size:10.5px;line-height:10.5px;color:#5d6570;letter-spacing:-1.062px;">FILE</span>
<span class="t" style="left:231.5px;top:93.3px;font-size:12px;line-height:12px;color:#1c1c24;letter-spacing:-0.403px;">Go To</span>
<span class="t" style="left:294.6px;top:85.3px;font-size:12px;line-height:12px;color:#1c1c24;letter-spacing:-0.481px;">Find</span>
<span class="t" style="left:294.6px;top:109.4px;font-size:12px;line-height:12px;color:#1c1c24;letter-spacing:-0.090px;">Bookmark</span>
<span class="t" style="left:270.5px;top:129.7px;font-size:10.5px;line-height:10.5px;color:#5d6570;letter-spacing:-0.050px;">NAVIGATE</span>
<span class="t" style="left:381.5px;top:93.3px;font-size:12px;line-height:12px;color:#1c1c24;letter-spacing:-0.266px;">Refactor</span>
<span class="t" style="left:424.4px;top:129.7px;font-size:10.5px;line-height:10.5px;color:#5d6570;letter-spacing:-0.281px;">CODE</span>
<span class="t" style="left:538.4px;top:73.8px;font-size:12px;line-height:12px;color:#1c1c24;letter-spacing:-0.059px;">Profiler</span>
<span class="t" style="left:538.4px;top:97.3px;font-size:12px;line-height:12px;color:#1c1c24;letter-spacing:-0.367px;">Analyze</span>
<span class="t" style="left:525.0px;top:129.7px;font-size:10.5px;line-height:10.5px;color:#5d6570;letter-spacing:-0.513px;">ANALYZE</span>
<span class="t" style="left:605.4px;top:93.3px;font-size:12px;line-height:12px;color:#1c1c24;letter-spacing:-0.808px;">Run</span>
<span class="t" style="left:596.0px;top:109.4px;font-size:12px;line-height:12px;color:#1c1c24;letter-spacing:-0.255px;">Section</span>
<span class="t" style="left:667.5px;top:61.3px;font-size:12px;line-height:12px;color:#1c1c24;letter-spacing:-0.352px;">Section Break</span>
<span class="t" style="left:667.5px;top:85.3px;font-size:12px;line-height:12px;color:#1c1c24;letter-spacing:-0.161px;">Run and Advance</span>
<span class="t" style="left:667.5px;top:109.4px;font-size:12px;line-height:12px;color:#1c1c24;letter-spacing:-0.327px;">Run to End</span>
<span class="t" style="left:654.5px;top:129.7px;font-size:10.5px;line-height:10.5px;color:#5d6570;letter-spacing:-0.429px;">SECTION</span>
<span class="t" style="left:134.8px;top:150.8px;font-size:12px;line-height:12px;color:#1c1c24;letter-spacing:-1.600px;">C:</span>
<span class="t" style="left:168.4px;top:150.8px;font-size:12px;line-height:12px;color:#1c1c24;letter-spacing:-0.986px;">Users</span>
<span class="t" style="left:218.0px;top:150.8px;font-size:12px;line-height:12px;color:#1c1c24;letter-spacing:0.441px;">hp</span>
<span class="t" style="left:254.0px;top:150.8px;font-size:12px;line-height:12px;color:#1c1c24;letter-spacing:-0.000px;">Documents</span>
<span class="t" style="left:337.0px;top:150.8px;font-size:12px;line-height:12px;color:#1c1c24;letter-spacing:-0.345px;">MATLAB</span>
<span class="t" style="left:7.4px;top:173.3px;font-size:12px;line-height:12px;color:#303840;letter-spacing:-0.137px;">Current Folder</span>
<span class="t" style="left:46.4px;top:195.3px;font-size:12px;line-height:12px;color:#1c1c24;letter-spacing:-0.139px;">Name</span>
<span class="t" style="left:41.2px;top:215.3px;font-size:12px;line-height:12px;color:#000;letter-spacing:0.109px;">firstproject.m</span>
<span class="t" style="left:41.2px;top:232.3px;font-size:12px;line-height:12px;color:#000;letter-spacing:0.074px;">homework1.m</span>
<span class="t" style="left:41.2px;top:249.3px;font-size:12px;line-height:12px;color:#000;letter-spacing:0.155px;">opration.m</span>
<span class="t" style="left:41.2px;top:266.3px;font-size:12px;line-height:12px;color:#000;letter-spacing:-0.172px;">plues.m</span>
<span class="t" style="left:41.2px;top:283.3px;font-size:12px;line-height:12px;color:#000;letter-spacing:-0.172px;">quize.m</span>
<span class="t" style="left:41.2px;top:300.3px;font-size:12px;line-height:12px;color:#000;letter-spacing:0.166px;">ramp.m</span>
<span class="t" style="left:41.2px;top:317.3px;font-size:12px;line-height:12px;color:#000;letter-spacing:0.134px;">reflection.m</span>
<span class="t" style="left:41.2px;top:334.3px;font-size:12px;line-height:12px;color:#000;letter-spacing:-0.145px;">rewive.m</span>
<span class="t" style="left:41.2px;top:351.3px;font-size:12px;line-height:12px;color:#000;letter-spacing:-0.170px;">scalar.m</span>
<span class="t" style="left:41.2px;top:368.3px;font-size:12px;line-height:12px;color:#000;letter-spacing:0.011px;">secondproject.m</span>
<span class="t" style="left:41.2px;top:385.3px;font-size:12px;line-height:12px;color:#000;letter-spacing:0.193px;">shift.m</span>
<span class="t" style="left:41.2px;top:402.3px;font-size:12px;line-height:12px;color:#000;letter-spacing:0.045px;">tesstphoto.m</span>
<span class="t" style="left:41.2px;top:419.3px;font-size:12px;line-height:12px;color:#000;letter-spacing:0.215px;">thirdproject.m</span>
<span class="t" style="left:41.2px;top:436.3px;font-size:12px;line-height:12px;color:#000;letter-spacing:0.208px;">untitled.m</span>
<span class="t" style="left:41.2px;top:453.3px;font-size:12px;line-height:12px;color:#000;letter-spacing:0.160px;clip-path:inset(0 0 6.5px 0);">untitled2.m</span>
<span class="t" style="left:6.3px;top:465.1px;font-size:12px;line-height:12px;color:#000;letter-spacing:-0.050px;">homework1.m  (Script)</span>
<span class="t" style="left:7.0px;top:492.4px;font-size:12px;line-height:12px;color:#303840;letter-spacing:-0.227px;">Workspace</span>
<span class="t" style="left:370.4px;top:172.7px;font-size:12px;line-height:12px;color:#303840;letter-spacing:0.095px;">Editor - C:\Users\hp\Documents\MATLAB\homework1.m</span>
<span class="t" style="left:377.3px;top:194.5px;font-size:12px;line-height:12px;color:#303840;letter-spacing:0.160px;">untitled3.m</span>
<span class="t" style="left:478.6px;top:194.5px;font-size:12px;line-height:12px;color:#303840;letter-spacing:0.034px;">reflection.m</span>
<span class="t" style="left:582.7px;top:194.5px;font-size:12px;line-height:12px;color:#303840;letter-spacing:-0.102px;">rewive.m</span>
<span class="t" style="left:670.3px;top:194.5px;font-size:12px;line-height:12px;color:#303840;letter-spacing:-0.170px;">scalar.m</span>
<span class="t" style="left:754.2px;top:194.5px;font-size:12px;line-height:12px;color:#303840;letter-spacing:-0.25px;">secondproject.m</span>
<span class="t" style="left:382.0px;top:215.2px;font-size:18.27px;line-height:18.27px;color:#5a5a5a;font-family:'DejaVu Sans Mono', 'Liberation Mono', monospace;letter-spacing:0.001px;">1</span>
<span class="t" style="left:478.5px;top:215.2px;font-size:18.27px;line-height:18.27px;color:#0e0e0e;font-family:'DejaVu Sans Mono', 'Liberation Mono', monospace;letter-spacing:0.001px;-webkit-text-stroke:.25px;">n=-10:0.1:10;</span>
<span class="t" style="left:382.0px;top:240.2px;font-size:18.27px;line-height:18.27px;color:#5a5a5a;font-family:'DejaVu Sans Mono', 'Liberation Mono', monospace;letter-spacing:0.001px;">2</span>
<span class="t" style="left:478.5px;top:240.2px;font-size:18.27px;line-height:18.27px;color:#0e0e0e;font-family:'DejaVu Sans Mono', 'Liberation Mono', monospace;letter-spacing:0.001px;-webkit-text-stroke:.25px;">d=[n+2==0];</span>
<span class="t" style="left:382.0px;top:265.2px;font-size:18.27px;line-height:18.27px;color:#5a5a5a;font-family:'DejaVu Sans Mono', 'Liberation Mono', monospace;letter-spacing:0.001px;">3</span>
<span class="t" style="left:478.5px;top:265.2px;font-size:18.27px;line-height:18.27px;color:#0e0e0e;font-family:'DejaVu Sans Mono', 'Liberation Mono', monospace;letter-spacing:0.001px;-webkit-text-stroke:.25px;">subplot(3,1,1);</span>
<span class="t" style="left:382.0px;top:290.2px;font-size:18.27px;line-height:18.27px;color:#5a5a5a;font-family:'DejaVu Sans Mono', 'Liberation Mono', monospace;letter-spacing:0.001px;">4</span>
<span class="t" style="left:478.5px;top:290.2px;font-size:18.27px;line-height:18.27px;color:#0e0e0e;font-family:'DejaVu Sans Mono', 'Liberation Mono', monospace;letter-spacing:0.001px;-webkit-text-stroke:.25px;">stem(n,d,</span>
<span class="t" style="left:577.5px;top:290.2px;font-size:18.27px;line-height:18.27px;color:#a709f5;font-family:'DejaVu Sans Mono', 'Liberation Mono', monospace;letter-spacing:0.001px;-webkit-text-stroke:.25px;">&#x27;r&#x27;</span>
<span class="t" style="left:610.5px;top:290.2px;font-size:18.27px;line-height:18.27px;color:#0e0e0e;font-family:'DejaVu Sans Mono', 'Liberation Mono', monospace;letter-spacing:0.001px;-webkit-text-stroke:.25px;">,</span>
<span class="t" style="left:621.5px;top:290.2px;font-size:18.27px;line-height:18.27px;color:#a709f5;font-family:'DejaVu Sans Mono', 'Liberation Mono', monospace;letter-spacing:0.001px;-webkit-text-stroke:.25px;">&#x27;LineWidth&#x27;</span>
<span class="t" style="left:742.5px;top:290.2px;font-size:18.27px;line-height:18.27px;color:#0e0e0e;font-family:'DejaVu Sans Mono', 'Liberation Mono', monospace;letter-spacing:0.001px;-webkit-text-stroke:.25px;">,2);</span>
<span class="t" style="left:382.0px;top:315.2px;font-size:18.27px;line-height:18.27px;color:#5a5a5a;font-family:'DejaVu Sans Mono', 'Liberation Mono', monospace;letter-spacing:0.001px;">5</span>
<span class="t" style="left:478.5px;top:315.2px;font-size:18.27px;line-height:18.27px;color:#0e0e0e;font-family:'DejaVu Sans Mono', 'Liberation Mono', monospace;letter-spacing:0.001px;-webkit-text-stroke:.25px;">xlabel(</span>
<span class="t" style="left:555.5px;top:315.2px;font-size:18.27px;line-height:18.27px;color:#a709f5;font-family:'DejaVu Sans Mono', 'Liberation Mono', monospace;letter-spacing:0.001px;-webkit-text-stroke:.25px;">&#x27;n&#x27;</span>
<span class="t" style="left:588.5px;top:315.2px;font-size:18.27px;line-height:18.27px;color:#0e0e0e;font-family:'DejaVu Sans Mono', 'Liberation Mono', monospace;letter-spacing:0.001px;-webkit-text-stroke:.25px;">);</span>
<span class="t" style="left:382.0px;top:340.2px;font-size:18.27px;line-height:18.27px;color:#5a5a5a;font-family:'DejaVu Sans Mono', 'Liberation Mono', monospace;letter-spacing:0.001px;">6</span>
<span class="t" style="left:478.5px;top:340.2px;font-size:18.27px;line-height:18.27px;color:#0e0e0e;font-family:'DejaVu Sans Mono', 'Liberation Mono', monospace;letter-spacing:0.001px;-webkit-text-stroke:.25px;">ylabel(</span>
<span class="t" style="left:555.5px;top:340.2px;font-size:18.27px;line-height:18.27px;color:#a709f5;font-family:'DejaVu Sans Mono', 'Liberation Mono', monospace;letter-spacing:0.001px;-webkit-text-stroke:.25px;">&#x27;d(n)&#x27;</span>
<span class="t" style="left:621.5px;top:340.2px;font-size:18.27px;line-height:18.27px;color:#0e0e0e;font-family:'DejaVu Sans Mono', 'Liberation Mono', monospace;letter-spacing:0.001px;-webkit-text-stroke:.25px;">);</span>
<span class="t" style="left:382.0px;top:365.2px;font-size:18.27px;line-height:18.27px;color:#5a5a5a;font-family:'DejaVu Sans Mono', 'Liberation Mono', monospace;letter-spacing:0.001px;">7</span>
<span class="t" style="left:478.5px;top:365.2px;font-size:18.27px;line-height:18.27px;color:#0e0e0e;font-family:'DejaVu Sans Mono', 'Liberation Mono', monospace;letter-spacing:0.001px;-webkit-text-stroke:.25px;">title(</span>
<span class="t" style="left:544.5px;top:365.2px;font-size:18.27px;line-height:18.27px;color:#a709f5;font-family:'DejaVu Sans Mono', 'Liberation Mono', monospace;letter-spacing:0.001px;-webkit-text-stroke:.25px;">&#x27;Discrete Impluse Function&#x27;</span>
<span class="t" style="left:841.5px;top:365.2px;font-size:18.27px;line-height:18.27px;color:#0e0e0e;font-family:'DejaVu Sans Mono', 'Liberation Mono', monospace;letter-spacing:0.001px;-webkit-text-stroke:.25px;">);</span>
<span class="t" style="left:382.0px;top:390.2px;font-size:18.27px;line-height:18.27px;color:#5a5a5a;font-family:'DejaVu Sans Mono', 'Liberation Mono', monospace;letter-spacing:0.001px;">8</span>
<span class="t" style="left:478.5px;top:390.2px;font-size:18.27px;line-height:18.27px;color:#0e0e0e;font-family:'DejaVu Sans Mono', 'Liberation Mono', monospace;letter-spacing:0.001px;-webkit-text-stroke:.25px;">u=[n-1&gt;=0];</span>
<span class="t" style="left:382.0px;top:415.2px;font-size:18.27px;line-height:18.27px;color:#5a5a5a;font-family:'DejaVu Sans Mono', 'Liberation Mono', monospace;letter-spacing:0.001px;">9</span>
<span class="t" style="left:478.5px;top:415.2px;font-size:18.27px;line-height:18.27px;color:#0e0e0e;font-family:'DejaVu Sans Mono', 'Liberation Mono', monospace;letter-spacing:0.001px;-webkit-text-stroke:.25px;">u2=2*u;</span>
<span class="t" style="left:371.0px;top:440.2px;font-size:18.27px;line-height:18.27px;color:#5a5a5a;font-family:'DejaVu Sans Mono', 'Liberation Mono', monospace;letter-spacing:0.001px;">10</span>
<span class="t" style="left:478.5px;top:440.2px;font-size:18.27px;line-height:18.27px;color:#0e0e0e;font-family:'DejaVu Sans Mono', 'Liberation Mono', monospace;letter-spacing:0.001px;-webkit-text-stroke:.25px;">subplot(3,1,2);</span>
<span class="t" style="left:371.0px;top:465.2px;font-size:18.27px;line-height:18.27px;color:#5a5a5a;font-family:'DejaVu Sans Mono', 'Liberation Mono', monospace;letter-spacing:0.001px;">11</span>
<span class="t" style="left:478.5px;top:465.2px;font-size:18.27px;line-height:18.27px;color:#0e0e0e;font-family:'DejaVu Sans Mono', 'Liberation Mono', monospace;letter-spacing:0.001px;-webkit-text-stroke:.25px;">stem(n,u2,</span>
<span class="t" style="left:588.5px;top:465.2px;font-size:18.27px;line-height:18.27px;color:#a709f5;font-family:'DejaVu Sans Mono', 'Liberation Mono', monospace;letter-spacing:0.001px;-webkit-text-stroke:.25px;">&#x27;k&#x27;</span>
<span class="t" style="left:621.5px;top:465.2px;font-size:18.27px;line-height:18.27px;color:#0e0e0e;font-family:'DejaVu Sans Mono', 'Liberation Mono', monospace;letter-spacing:0.001px;-webkit-text-stroke:.25px;">,</span>
<span class="t" style="left:632.5px;top:465.2px;font-size:18.27px;line-height:18.27px;color:#a709f5;font-family:'DejaVu Sans Mono', 'Liberation Mono', monospace;letter-spacing:0.001px;-webkit-text-stroke:.25px;">&#x27;LineWidth&#x27;</span>
<span class="t" style="left:753.5px;top:465.2px;font-size:18.27px;line-height:18.27px;color:#0e0e0e;font-family:'DejaVu Sans Mono', 'Liberation Mono', monospace;letter-spacing:0.001px;-webkit-text-stroke:.25px;">,2);</span>
<span class="t" style="left:371.0px;top:490.2px;font-size:18.27px;line-height:18.27px;color:#5a5a5a;font-family:'DejaVu Sans Mono', 'Liberation Mono', monospace;letter-spacing:0.001px;">12</span>
<span class="t" style="left:478.5px;top:490.2px;font-size:18.27px;line-height:18.27px;color:#0e0e0e;font-family:'DejaVu Sans Mono', 'Liberation Mono', monospace;letter-spacing:0.001px;-webkit-text-stroke:.25px;">xlabel(</span>
<span class="t" style="left:555.5px;top:490.2px;font-size:18.27px;line-height:18.27px;color:#a709f5;font-family:'DejaVu Sans Mono', 'Liberation Mono', monospace;letter-spacing:0.001px;-webkit-text-stroke:.25px;">&#x27;n&#x27;</span>
<span class="t" style="left:588.5px;top:490.2px;font-size:18.27px;line-height:18.27px;color:#0e0e0e;font-family:'DejaVu Sans Mono', 'Liberation Mono', monospace;letter-spacing:0.001px;-webkit-text-stroke:.25px;">);</span>
<span class="t" style="left:615.0px;top:485.1px;font-size:21.5px;line-height:21.5px;color:rgba(140,140,140,.29);font-weight:bold;letter-spacing:0.237px;">mostaql.com</span>
</div>
<div id="fig">
<div class="b" style="left:0px;top:-1px;width:560px;height:56px;background:#ffffff;"></div>
<div class="b" style="left:0px;top:55px;width:560px;height:1px;background:#a8a8a8;"></div>
<div class="b" style="left:0px;top:56px;width:560px;height:26px;background:#f0f0f0;"></div>
<div class="b" style="left:0px;top:82px;width:560px;height:1px;background:#a8a8a8;"></div>
<svg style="left:440px;top:9px;" width="110" height="12" viewBox="0 0 110 12"><path d="M1,5.5 H11" stroke="#6a6a6a" stroke-width="1" fill="none"/><rect x="46.5" y="0.5" width="9.5" height="9.5" rx="1" fill="none" stroke="#6a6a6a" stroke-width="1"/><path d="M92.3,0.5 L102,10.2 M102,0.5 L92.3,10.2" stroke="#6a6a6a" stroke-width="1" fill="none"/></svg>
<svg style="left:548.4000000000001px;top:39px;" width="7" height="6" viewBox="0 0 7 6"><path d="M0.8,0.8 L5,4.2" stroke="#111" stroke-width="1.5" fill="none"/><polygon points="6.8,5.8 2.2,5.8 6.8,1.6" fill="#111"/></svg>
<div class="b" style="left:95px;top:59px;width:1px;height:21px;background:#b4b4b4;"></div>
<div class="b" style="left:126px;top:59px;width:1px;height:21px;background:#b4b4b4;"></div>
<div class="b" style="left:180px;top:59px;width:1px;height:21px;background:#b4b4b4;"></div>
<div class="b" style="left:73.39999999999998px;top:122.4px;width:433.4px;height:69.6px;background:#ffffff;"></div>
<span class="t" style="left:-14.700000000000045px;top:151.2px;width:120px;height:12px;line-height:12px;text-align:center;font-size:12.1px;color:#262626;transform:rotate(-90deg);">d(n)</span>
<svg style="left:73.39999999999998px;top:122.4px;" width="433.4" height="69.6" viewBox="0 0 433.4 69.6"><rect x="0.5" y="0.5" width="432.4" height="68.6" fill="none" stroke="#262626" stroke-width="1"/><path d="M43.3,69.6 v-4.5 M43.3,0 v4.5" stroke="#262626" stroke-width="1"/><path d="M86.7,69.6 v-4.5 M86.7,0 v4.5" stroke="#262626" stroke-width="1"/><path d="M130.0,69.6 v-4.5 M130.0,0 v4.5" stroke="#262626" stroke-width="1"/><path d="M173.4,69.6 v-4.5 M173.4,0 v4.5" stroke="#262626" stroke-width="1"/><path d="M216.7,69.6 v-4.5 M216.7,0 v4.5" stroke="#262626" stroke-width="1"/><path d="M260.0,69.6 v-4.5 M260.0,0 v4.5" stroke="#262626" stroke-width="1"/><path d="M303.4,69.6 v-4.5 M303.4,0 v4.5" stroke="#262626" stroke-width="1"/><path d="M346.7,69.6 v-4.5 M346.7,0 v4.5" stroke="#262626" stroke-width="1"/><path d="M390.1,69.6 v-4.5 M390.1,0 v4.5" stroke="#262626" stroke-width="1"/><path d="M0,34.8 h4.5 M433.4,34.8 h-4.5" stroke="#262626" stroke-width="1"/></svg>
<svg style="left:73.39999999999998px;top:122.4px;" width="433.4" height="69.6" viewBox="0 0 433.4 69.6"><line x1="-0.5" y1="70.5" x2="433.9" y2="70.5" stroke="#ff0000" stroke-width="10.2" stroke-linecap="round"/><line x1="173.36" y1="0" x2="173.36" y2="69.6" stroke="#ff0000" stroke-width="2.7"/><circle cx="173.36" cy="0" r="4" fill="none" stroke="#ff0000" stroke-width="2.3"/><line x1="0" y1="69.5" x2="433.4" y2="69.5" stroke="#1a0000" stroke-width="1" opacity=".75"/></svg>
<div class="b" style="left:73.39999999999998px;top:247.2px;width:433.4px;height:70.19999999999999px;background:#ffffff;"></div>
<span class="t" style="left:-5.7999999999999545px;top:276.29999999999995px;width:120px;height:12px;line-height:12px;text-align:center;font-size:12.1px;color:#262626;transform:rotate(-90deg);">u(n)</span>
<svg style="left:73.39999999999998px;top:247.2px;" width="433.4" height="70.19999999999999" viewBox="0 0 433.4 70.19999999999999"><rect x="0.5" y="0.5" width="432.4" height="69.19999999999999" fill="none" stroke="#262626" stroke-width="1"/><path d="M43.3,70.19999999999999 v-4.5 M43.3,0 v4.5" stroke="#262626" stroke-width="1"/><path d="M86.7,70.19999999999999 v-4.5 M86.7,0 v4.5" stroke="#262626" stroke-width="1"/><path d="M130.0,70.19999999999999 v-4.5 M130.0,0 v4.5" stroke="#262626" stroke-width="1"/><path d="M173.4,70.19999999999999 v-4.5 M173.4,0 v4.5" stroke="#262626" stroke-width="1"/><path d="M216.7,70.19999999999999 v-4.5 M216.7,0 v4.5" stroke="#262626" stroke-width="1"/><path d="M260.0,70.19999999999999 v-4.5 M260.0,0 v4.5" stroke="#262626" stroke-width="1"/><path d="M303.4,70.19999999999999 v-4.5 M303.4,0 v4.5" stroke="#262626" stroke-width="1"/><path d="M346.7,70.19999999999999 v-4.5 M346.7,0 v4.5" stroke="#262626" stroke-width="1"/><path d="M390.1,70.19999999999999 v-4.5 M390.1,0 v4.5" stroke="#262626" stroke-width="1"/><path d="M0,35.1 h4.5 M433.4,35.1 h-4.5" stroke="#262626" stroke-width="1"/></svg>
<svg style="left:73.39999999999998px;top:247.2px;" width="433.4" height="70.19999999999999" viewBox="0 0 433.4 70.19999999999999"><line x1="-0.5" y1="70.6" x2="236.2030000000001" y2="70.6" stroke="#000000" stroke-width="10" stroke-linecap="round"/><rect x="237.37" y="0" width="197.22999999999996" height="70.79999999999998" fill="#000000"/><line x1="238.37" y1="0" x2="433.9" y2="0" stroke="#000000" stroke-width="10.4" stroke-linecap="round"/><path d="M238.37,0.5 H432.9 V69.69999999999999 H238.37" stroke="#2c2c2c" stroke-width="1" fill="none"/><path d="M260.0,70.19999999999999 v-4.5 M260.0,0 v4.5" stroke="#2c2c2c" stroke-width="1"/><path d="M303.4,70.19999999999999 v-4.5 M303.4,0 v4.5" stroke="#2c2c2c" stroke-width="1"/><path d="M346.7,70.19999999999999 v-4.5 M346.7,0 v4.5" stroke="#2c2c2c" stroke-width="1"/><path d="M390.1,70.19999999999999 v-4.5 M390.1,0 v4.5" stroke="#2c2c2c" stroke-width="1"/></svg>
<div class="b" style="left:73.39999999999998px;top:372.2px;width:433.4px;height:70.19999999999999px;background:#ffffff;"></div>
<span class="t" style="left:-5.7999999999999545px;top:401.29999999999995px;width:120px;height:12px;line-height:12px;text-align:center;font-size:12.1px;color:#262626;transform:rotate(-90deg);">d(n+2)+2u(n-1)</span>
<svg style="left:73.39999999999998px;top:372.2px;" width="433.4" height="70.19999999999999" viewBox="0 0 433.4 70.19999999999999"><rect x="0.5" y="0.5" width="432.4" height="69.19999999999999" fill="none" stroke="#262626" stroke-width="1"/><path d="M43.3,70.19999999999999 v-4.5 M43.3,0 v4.5" stroke="#262626" stroke-width="1"/><path d="M86.7,70.19999999999999 v-4.5 M86.7,0 v4.5" stroke="#262626" stroke-width="1"/><path d="M130.0,70.19999999999999 v-4.5 M130.0,0 v4.5" stroke="#262626" stroke-width="1"/><path d="M173.4,70.19999999999999 v-4.5 M173.4,0 v4.5" stroke="#262626" stroke-width="1"/><path d="M216.7,70.19999999999999 v-4.5 M216.7,0 v4.5" stroke="#262626" stroke-width="1"/><path d="M260.0,70.19999999999999 v-4.5 M260.0,0 v4.5" stroke="#262626" stroke-width="1"/><path d="M303.4,70.19999999999999 v-4.5 M303.4,0 v4.5" stroke="#262626" stroke-width="1"/><path d="M346.7,70.19999999999999 v-4.5 M346.7,0 v4.5" stroke="#262626" stroke-width="1"/><path d="M390.1,70.19999999999999 v-4.5 M390.1,0 v4.5" stroke="#262626" stroke-width="1"/><path d="M0,35.1 h4.5 M433.4,35.1 h-4.5" stroke="#262626" stroke-width="1"/></svg>
<svg style="left:73.39999999999998px;top:372.2px;" width="433.4" height="70.19999999999999" viewBox="0 0 433.4 70.19999999999999"><line x1="-0.5" y1="70.6" x2="236.2030000000001" y2="70.6" stroke="#00ff00" stroke-width="10" stroke-linecap="round"/><rect x="237.37" y="0" width="197.22999999999996" height="70.79999999999998" fill="#00ff00"/><line x1="238.37" y1="0" x2="433.9" y2="0" stroke="#00ff00" stroke-width="10" stroke-linecap="round"/><line x1="173.36" y1="35.099999999999994" x2="173.36" y2="70.19999999999999" stroke="#00ff00" stroke-width="2.7"/><circle cx="173.36" cy="35.099999999999994" r="3.9" fill="none" stroke="#00ff00" stroke-width="2.5"/><path d="M238.37,69.69999999999999 H433.9" stroke="#101a10" stroke-width="1" fill="none" opacity=".9"/><path d="M260.0,70.19999999999999 v-4.5" stroke="#101a10" stroke-width="1" opacity=".9"/><path d="M303.4,70.19999999999999 v-4.5" stroke="#101a10" stroke-width="1" opacity=".9"/><path d="M346.7,70.19999999999999 v-4.5" stroke="#101a10" stroke-width="1" opacity=".9"/><path d="M390.1,70.19999999999999 v-4.5" stroke="#101a10" stroke-width="1" opacity=".9"/><path d="M432.9,70.19999999999999 v-4.5" stroke="#101a10" stroke-width="1" opacity=".9"/></svg>
<svg style="left:8px;top:6.5px;" width="16" height="15" viewBox="0 0 16 15"><rect x="0.5" y="0.5" width="15" height="14" fill="#fdfdfd" stroke="#9a9a9a" stroke-width="1"/><rect x="1" y="1" width="14" height="2.2" fill="#c9d6e6"/><g transform="translate(2.4,3.6) scale(0.7,0.64)"><use href="#mlogo"/></g></svg>
<svg width="0" height="0" style="left:0;top:0"><defs>
<linearGradient id="gCb" x1="0" y1="0" x2="0" y2="1"><stop offset="0" stop-color="#6a8ef0"/><stop offset=".35" stop-color="#8fd0e8"/><stop offset=".6" stop-color="#d8eaa0"/><stop offset=".8" stop-color="#f6d8a0"/><stop offset="1" stop-color="#eaa0c8"/></linearGradient>
<linearGradient id="gFl2" x1="0" y1="0" x2="0" y2="1"><stop offset="0" stop-color="#8c9cf2"/><stop offset="1" stop-color="#4652c4"/></linearGradient>
<linearGradient id="gFo2" x1="0" y1="0" x2="0" y2="1"><stop offset="0" stop-color="#fff0b8"/><stop offset="1" stop-color="#f6c452"/></linearGradient>
</defs></svg>
<svg style="left:3px;top:59px;" width="17" height="17" viewBox="0 0 17 17"><path d="M3.5,2 H11.5 L15.5,6 V16 H3.5 Z" fill="#fbfdff" stroke="#4668b4" stroke-width="1.1" stroke-linejoin="round"/><path d="M11.5,2 V6 H15.5" fill="#dce6f6" stroke="#4668b4" stroke-width=".8"/><path d="M3,0 V6 M0,3 H6 M0.9,0.9 L5.1,5.1 M5.1,0.9 L0.9,5.1" stroke="#f0641e" stroke-width="1.2"/><circle cx="3" cy="3" r="1.5" fill="#ffb028"/></svg>
<svg style="left:26px;top:60px;" width="17" height="16" viewBox="0 0 17 16"><path d="M0.6,4.5 L2,2.8 H6 L7.2,4.5 H13 V14.5 H0.6 Z" fill="#d9a545" stroke="#b07a18" stroke-width=".9" stroke-linejoin="round"/><path d="M2.6,7.2 H15.6 L13,14.8 H0.6 Z" fill="url(#gFo2)" stroke="#b07a18" stroke-width=".9" stroke-linejoin="round"/><path d="M8.5,3.6 C10,1 13,0.8 14.5,3" stroke="#3c6cc0" stroke-width="1.3" fill="none"/><polygon points="15.8,1 15.6,4.8 12.4,3.6" fill="#3c6cc0"/></svg>
<svg style="left:50px;top:60.5px;" width="15" height="15" viewBox="0 0 15 15"><path d="M0.5,0.5 H14.5 V14.5 H2 L0.5,13 Z" fill="url(#gFl2)" stroke="#2c3590" stroke-width="1"/><rect x="3" y="1" width="9" height="6.4" fill="#f4f6ff"/><rect x="3.6" y="9.6" width="7.8" height="4.9" fill="#22264a"/><rect x="8" y="10.6" width="2.2" height="3.2" fill="#e8e8f4"/></svg>
<svg style="left:72.5px;top:59.5px;" width="16" height="17" viewBox="0 0 16 17"><polygon points="5,0.6 12,0.6 13.6,7 3.6,7" fill="#fafafa" stroke="#9a9a9a" stroke-width=".8"/><path d="M1.2,7 H14.8 L15.4,12.5 Q15.4,15.8 8,16.2 Q0.6,15.8 0.6,12.5 Z" fill="#bcbcbc" stroke="#6c6c6c" stroke-width=".9"/><path d="M1.5,10.2 H14.5" stroke="#efefef" stroke-width="1.4"/><path d="M3.5,13.2 H12.5" stroke="#555" stroke-width="1.6"/><circle cx="12.6" cy="11.8" r=".9" fill="#46c23a"/></svg>
<svg style="left:102.5px;top:59.5px;" width="17" height="17" viewBox="0 0 17 17"><rect x="3.2" y="0.6" width="11.2" height="9" fill="#f0f4fa" stroke="#3c5a96" stroke-width="1.1"/><rect x="3.2" y="0.6" width="11.2" height="2" fill="#3c5a96"/><rect x="0.6" y="3.8" width="11.2" height="9" fill="#f8fafd" stroke="#3c5a96" stroke-width="1.1"/><rect x="0.6" y="3.8" width="11.2" height="2" fill="#3c5a96"/><rect x="2" y="10.6" width="7.4" height="5" rx="2.4" fill="none" stroke="#5a8ad0" stroke-width="1.7"/><rect x="7.6" y="10.6" width="7.4" height="5" rx="2.4" fill="none" stroke="#5a8ad0" stroke-width="1.7"/></svg>
<svg style="left:136.5px;top:59.5px;" width="11" height="16" viewBox="0 0 11 16"><rect x="0.7" y="0.7" width="9.6" height="14.6" fill="url(#gCb)" stroke="#2c3a8a" stroke-width="1.3"/></svg>
<svg style="left:156.70000000000005px;top:59.5px;" width="16" height="16" viewBox="0 0 16 16"><rect x="0.7" y="0.7" width="14.6" height="14.6" fill="#fdfdfd" stroke="#2c3a8a" stroke-width="1.3"/><rect x="2.6" y="3.6" width="4.4" height="3.6" fill="#e8433a"/><rect x="2.6" y="9.4" width="4.4" height="3.6" fill="#3c6cd8"/><path d="M9,5.4 H13 M9,11.2 H13" stroke="#111" stroke-width="1.3"/></svg>
<svg style="left:192.5px;top:61px;" width="10" height="15" viewBox="0 0 10 15"><path d="M0.7,0.7 V12 L3.4,9.4 L5.4,14 L7.2,13.2 L5.2,8.8 H9 Z" fill="#fff" stroke="#000" stroke-width="1.1" stroke-linejoin="round"/></svg>
<svg style="left:211px;top:59.5px;" width="17" height="16" viewBox="0 0 17 16"><rect x="0.6" y="0.6" width="15.4" height="14.8" fill="#fdfdfd" stroke="#7a7a7a" stroke-width="1"/><rect x="0.6" y="0.6" width="15.4" height="2.4" fill="#5a86c8"/><rect x="8.6" y="3" width="7.4" height="12.4" fill="#e4e4e4" stroke="#7a7a7a" stroke-width=".8"/><path d="M10.4,6 H14.4 M10.4,8.6 H14.4 M10.4,11.2 H14.4" stroke="#222" stroke-width="1.2"/></svg>
<span class="t" style="left:29.8px;top:9.0px;font-size:12px;line-height:12px;color:#8c8c8c;letter-spacing:-0.547px;">Figure 1</span>
<span class="t" style="left:8.6px;top:36.8px;font-size:12px;line-height:12px;color:#000;letter-spacing:-0.648px;">File</span>
<span class="t" style="left:43.4px;top:36.8px;font-size:12px;line-height:12px;color:#000;letter-spacing:-0.496px;">Edit</span>
<span class="t" style="left:80.3px;top:36.8px;font-size:12px;line-height:12px;color:#000;letter-spacing:-0.566px;">View</span>
<span class="t" style="left:121.0px;top:36.8px;font-size:12px;line-height:12px;color:#000;letter-spacing:-0.263px;">Insert</span>
<span class="t" style="left:166.6px;top:36.8px;font-size:12px;line-height:12px;color:#000;letter-spacing:-0.279px;">Tools</span>
<span class="t" style="left:211.4px;top:36.8px;font-size:12px;line-height:12px;color:#000;letter-spacing:-0.405px;">Desktop</span>
<span class="t" style="left:270.3px;top:36.8px;font-size:12px;line-height:12px;color:#000;letter-spacing:0.183px;">Window</span>
<span class="t" style="left:331.3px;top:36.8px;font-size:12px;line-height:12px;color:#000;letter-spacing:-0.162px;">Help</span>
<span class="t" style="left:212.6px;top:107.4px;font-size:12px;line-height:12px;color:#000;font-weight:bold;letter-spacing:0.190px;">Discrete Impluse Function</span>
<span class="t" style="left:-790.0px;top:198.8px;font-size:11px;line-height:11px;color:#262626;left:43.09999999999998px;width:60px;text-align:center;">-10</span>
<span class="t" style="left:-790.0px;top:198.8px;font-size:11px;line-height:11px;color:#262626;left:85.74000000000001px;width:60px;text-align:center;">-8</span>
<span class="t" style="left:-790.0px;top:198.8px;font-size:11px;line-height:11px;color:#262626;left:129.07999999999993px;width:60px;text-align:center;">-6</span>
<span class="t" style="left:-790.0px;top:198.8px;font-size:11px;line-height:11px;color:#262626;left:172.41999999999996px;width:60px;text-align:center;">-4</span>
<span class="t" style="left:-790.0px;top:198.8px;font-size:11px;line-height:11px;color:#262626;left:215.76px;width:60px;text-align:center;">-2</span>
<span class="t" style="left:-790.0px;top:198.8px;font-size:11px;line-height:11px;color:#262626;left:260.3999999999999px;width:60px;text-align:center;">0</span>
<span class="t" style="left:-790.0px;top:198.8px;font-size:11px;line-height:11px;color:#262626;left:303.74000000000007px;width:60px;text-align:center;">2</span>
<span class="t" style="left:-790.0px;top:198.8px;font-size:11px;line-height:11px;color:#262626;left:347.08px;width:60px;text-align:center;">4</span>
<span class="t" style="left:-790.0px;top:198.8px;font-size:11px;line-height:11px;color:#262626;left:390.4199999999999px;width:60px;text-align:center;">6</span>
<span class="t" style="left:-790.0px;top:198.8px;font-size:11px;line-height:11px;color:#262626;left:433.76000000000005px;width:60px;text-align:center;">8</span>
<span class="t" style="left:-790.0px;top:198.8px;font-size:11px;line-height:11px;color:#262626;left:477.09999999999997px;width:60px;text-align:center;">10</span>
<span class="t" style="left:-790.0px;top:214.8px;font-size:12.1px;line-height:12.1px;color:#262626;left:260.0999999999999px;width:60px;text-align:center;">n</span>
<span class="t" style="left:-790.0px;top:118.6px;font-size:11px;line-height:11px;color:#262626;left:10.0px;width:60px;text-align:right;">1</span>
<span class="t" style="left:-790.0px;top:153.4px;font-size:11px;line-height:11px;color:#262626;left:10.0px;width:60px;text-align:right;">0.5</span>
<span class="t" style="left:-790.0px;top:188.2px;font-size:11px;line-height:11px;color:#262626;left:10.0px;width:60px;text-align:right;">0</span>
<span class="t" style="left:224.8px;top:232.2px;font-size:12px;line-height:12px;color:#000;font-weight:bold;letter-spacing:0.186px;">Discrete unit Function</span>
<span class="t" style="left:-790.0px;top:324.2px;font-size:11px;line-height:11px;color:#262626;left:43.09999999999998px;width:60px;text-align:center;">-10</span>
<span class="t" style="left:-790.0px;top:324.2px;font-size:11px;line-height:11px;color:#262626;left:85.74000000000001px;width:60px;text-align:center;">-8</span>
<span class="t" style="left:-790.0px;top:324.2px;font-size:11px;line-height:11px;color:#262626;left:129.07999999999993px;width:60px;text-align:center;">-6</span>
<span class="t" style="left:-790.0px;top:324.2px;font-size:11px;line-height:11px;color:#262626;left:172.41999999999996px;width:60px;text-align:center;">-4</span>
<span class="t" style="left:-790.0px;top:324.2px;font-size:11px;line-height:11px;color:#262626;left:215.76px;width:60px;text-align:center;">-2</span>
<span class="t" style="left:-790.0px;top:324.2px;font-size:11px;line-height:11px;color:#262626;left:260.3999999999999px;width:60px;text-align:center;">0</span>
<span class="t" style="left:-790.0px;top:324.2px;font-size:11px;line-height:11px;color:#262626;left:303.74000000000007px;width:60px;text-align:center;">2</span>
<span class="t" style="left:-790.0px;top:324.2px;font-size:11px;line-height:11px;color:#262626;left:347.08px;width:60px;text-align:center;">4</span>
<span class="t" style="left:-790.0px;top:324.2px;font-size:11px;line-height:11px;color:#262626;left:390.4199999999999px;width:60px;text-align:center;">6</span>
<span class="t" style="left:-790.0px;top:324.2px;font-size:11px;line-height:11px;color:#262626;left:433.76000000000005px;width:60px;text-align:center;">8</span>
<span class="t" style="left:-790.0px;top:324.2px;font-size:11px;line-height:11px;color:#262626;left:477.09999999999997px;width:60px;text-align:center;">10</span>
<span class="t" style="left:-790.0px;top:340.2px;font-size:12.1px;line-height:12.1px;color:#262626;left:260.0999999999999px;width:60px;text-align:center;">n</span>
<span class="t" style="left:-790.0px;top:243.4px;font-size:11px;line-height:11px;color:#262626;left:10.0px;width:60px;text-align:right;">2</span>
<span class="t" style="left:-790.0px;top:278.5px;font-size:11px;line-height:11px;color:#262626;left:10.0px;width:60px;text-align:right;">1</span>
<span class="t" style="left:-790.0px;top:313.6px;font-size:11px;line-height:11px;color:#262626;left:10.0px;width:60px;text-align:right;">0</span>
<span class="t" style="left:222.0px;top:357.2px;font-size:12px;line-height:12px;color:#000;font-weight:bold;letter-spacing:0.160px;">Final Discrete Function</span>
<span class="t" style="left:-790.0px;top:449.2px;font-size:11px;line-height:11px;color:#262626;left:43.09999999999998px;width:60px;text-align:center;">-10</span>
<span class="t" style="left:-790.0px;top:449.2px;font-size:11px;line-height:11px;color:#262626;left:85.74000000000001px;width:60px;text-align:center;">-8</span>
<span class="t" style="left:-790.0px;top:449.2px;font-size:11px;line-height:11px;color:#262626;left:129.07999999999993px;width:60px;text-align:center;">-6</span>
<span class="t" style="left:-790.0px;top:449.2px;font-size:11px;line-height:11px;color:#262626;left:172.41999999999996px;width:60px;text-align:center;">-4</span>
<span class="t" style="left:-790.0px;top:449.2px;font-size:11px;line-height:11px;color:#262626;left:215.76px;width:60px;text-align:center;">-2</span>
<span class="t" style="left:-790.0px;top:449.2px;font-size:11px;line-height:11px;color:#262626;left:260.3999999999999px;width:60px;text-align:center;">0</span>
<span class="t" style="left:-790.0px;top:449.2px;font-size:11px;line-height:11px;color:#262626;left:303.74000000000007px;width:60px;text-align:center;">2</span>
<span class="t" style="left:-790.0px;top:449.2px;font-size:11px;line-height:11px;color:#262626;left:347.08px;width:60px;text-align:center;">4</span>
<span class="t" style="left:-790.0px;top:449.2px;font-size:11px;line-height:11px;color:#262626;left:390.4199999999999px;width:60px;text-align:center;">6</span>
<span class="t" style="left:-790.0px;top:449.2px;font-size:11px;line-height:11px;color:#262626;left:433.76000000000005px;width:60px;text-align:center;">8</span>
<span class="t" style="left:-790.0px;top:449.2px;font-size:11px;line-height:11px;color:#262626;left:477.09999999999997px;width:60px;text-align:center;">10</span>
<span class="t" style="left:-790.0px;top:465.2px;font-size:12.1px;line-height:12.1px;color:#262626;left:260.0999999999999px;width:60px;text-align:center;">n</span>
<span class="t" style="left:-790.0px;top:368.4px;font-size:11px;line-height:11px;color:#262626;left:10.0px;width:60px;text-align:right;">2</span>
<span class="t" style="left:-790.0px;top:403.5px;font-size:11px;line-height:11px;color:#262626;left:10.0px;width:60px;text-align:right;">1</span>
<span class="t" style="left:-790.0px;top:438.6px;font-size:11px;line-height:11px;color:#262626;left:10.0px;width:60px;text-align:right;">0</span>
</div>
</body></html>
